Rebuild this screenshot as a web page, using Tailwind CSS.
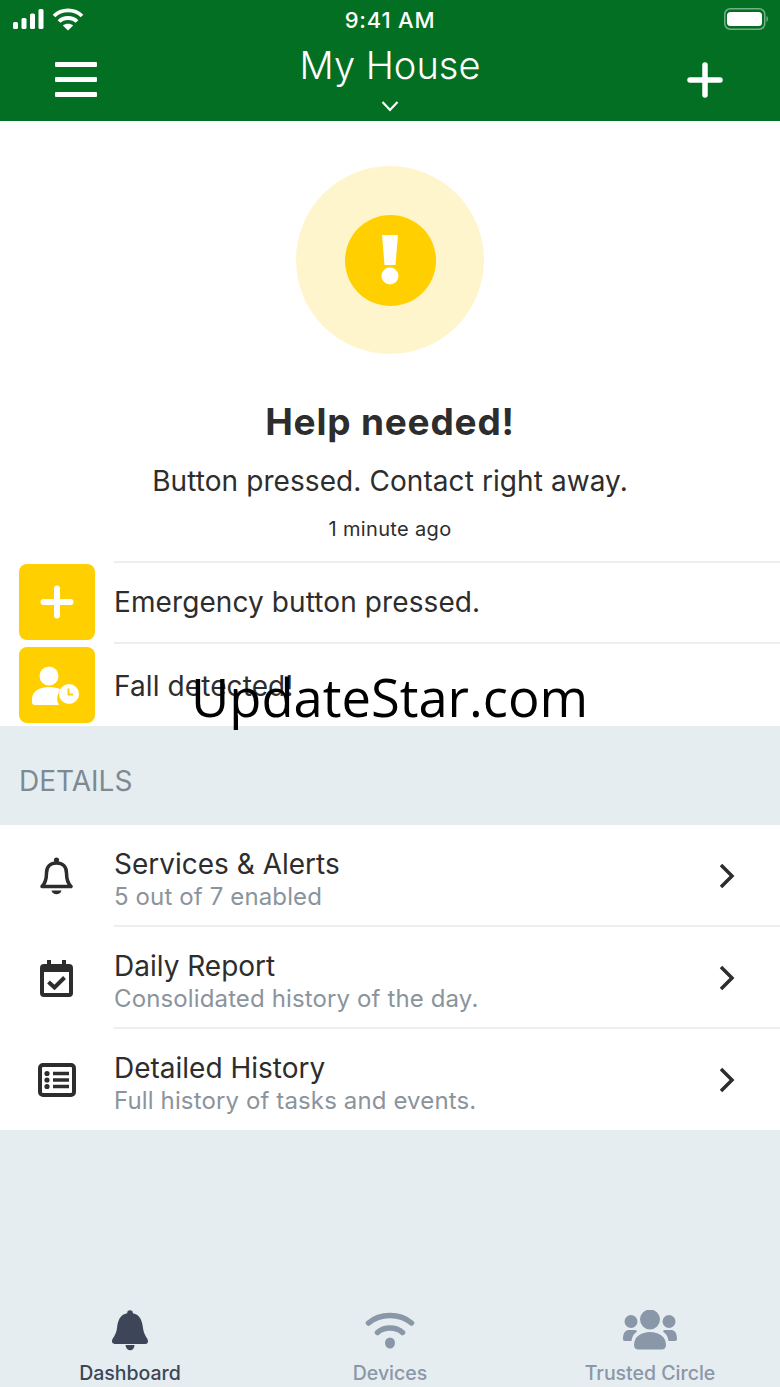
<!DOCTYPE html>
<html><head><meta charset="utf-8"><script src="https://cdn.jsdelivr.net/npm/@tailwindcss/browser@4"></script></head>
<body class="m-0">
<div class="relative w-[780px] h-[1387px] overflow-hidden bg-[#e6edf0] font-['Inter',sans-serif] flex flex-col">
  <header class="h-[121px] bg-[#036f23] text-white shrink-0 flex flex-col">
    <div class="h-[40px] px-[12px] flex items-center justify-between relative">
      <div class="flex items-center gap-[6px] -mt-[2px]">
        <svg width="34" height="22" viewBox="0 0 34 22" fill="#fff"><rect x="1" y="14" width="5" height="7" rx="1.5"/><rect x="9.5" y="10" width="5" height="11" rx="1.5"/><rect x="18" y="5.5" width="5" height="15.5" rx="1.5"/><rect x="26.5" y="1" width="5" height="20" rx="1.5"/></svg>
        <svg width="32" height="24" viewBox="0 0 32 24" fill="none" stroke="#fff" stroke-width="3.800"><path d="M2 9C9.500 1.500 22.500 1.500 30 9"/><path d="M7 14.500C11.500 9.800 20.500 9.800 25 14.500"/><path d="M16 23.500L10.800 18.500C13.500 16 18.500 16 21.200 18.500Z" fill="#fff" stroke="none"/></svg>
      </div>
      <span class="absolute left-0 right-0 text-center text-[22px] tracking-[0.800px] font-medium leading-none">9:41 AM</span>
      <svg width="44" height="24" viewBox="0 0 44 24" fill="none"><rect x="0.750" y="0.750" width="40" height="20.500" rx="5.500" stroke="#fff" stroke-opacity=".45" stroke-width="1.500"/><rect x="3" y="4" width="35" height="14" rx="3.500" fill="#fff"/><path d="M42.500 8v6c1-.5 1.500-1.700 1.500-3s-.5-2.500-1.500-3z" fill="#fff" fill-opacity=".45"/></svg>
    </div>
    <div class="flex-1 relative flex justify-between items-start pl-[55px] pr-[57px]">
      <div class="mt-[22px] w-[42px] flex flex-col gap-[10px]"><span class="h-[5px] bg-white block rounded-[1px]"></span><span class="h-[5px] bg-white block rounded-[1px]"></span><span class="h-[5px] bg-white block rounded-[1px]"></span></div>
      <div class="absolute left-0 right-0 top-[1px] flex flex-col items-center">
        <span class="text-[38px] leading-[48px] font-light">My House</span>
        <svg width="20" height="12" viewBox="0 0 20 12" fill="none" stroke="#fff" stroke-width="2.200" class="mt-[11px]"><path d="M2.500 2L10 10L17.500 2"/></svg>
      </div>
      <svg width="36" height="36" viewBox="0 0 36 36" class="mt-[22px]" stroke="#fff" stroke-width="5.500" stroke-linecap="round"><path d="M18 3V33M3 18H33"/></svg>
    </div>
  </header>

  <section class="h-[605px] bg-white shrink-0 flex flex-col">
    <div class="flex flex-col items-center pt-[45px]">
      <div class="w-[188px] h-[188px] rounded-full bg-[#fff5cc] flex items-center justify-center">
        <div class="w-[91px] h-[91px] rounded-full bg-[#ffcf00] flex items-center justify-center">
          <svg width="20" height="50" viewBox="0 0 20 50" fill="#fff"><path d="M2 0H18L15.500 30H4.500Z"/><circle cx="10" cy="41" r="8.500"/></svg>
        </div>
      </div>
      <h1 class="mt-[46px] text-[37px] leading-[44px] font-bold tracking-[0.800px] text-[#2d2d2d]">Help needed!</h1>
      <p class="mt-[20px] text-[28px] leading-[34px] tracking-[0.080px] text-[#2d2d2d]">Button pressed. Contact right away.</p>
      <p class="mt-[18px] text-[20px] leading-[26px] tracking-[0.350px] text-[#2d2d2d]">1 minute ago</p>
    </div>
    <div class="mt-[19px] flex flex-col">
      <div class="flex h-[83px] pl-[19px]">
        <div class="mt-[3px] w-[76px] h-[76px] rounded-[8px] bg-[#ffcf00] flex items-center justify-center shrink-0">
          <svg width="34" height="34" viewBox="0 0 34 34" stroke="#fff" stroke-width="6" stroke-linecap="round"><path d="M17 3.500V30.500M3.500 17H30.500"/></svg>
        </div>
        <div class="ml-[19px] flex-1 border-y-2 border-[#eceff1] flex items-center pb-[2px] text-[28px] tracking-[0.100px] text-[#2d2d2d]">Emergency button pressed.</div>
      </div>
      <div class="flex h-[83px] pl-[19px]">
        <div class="mt-[3px] w-[76px] h-[76px] rounded-[8px] bg-[#ffcf00] flex items-center justify-center shrink-0">
          <svg width="50" height="42" viewBox="0 0 50 42" fill="#fff"><circle cx="17" cy="12" r="9.500"/><path d="M3 41C1 41 0 40 0 38V35C0 27 8 23 17 23C22 23 26 24 29 25.500C25 29.500 24 36 27 41Z"/><circle cx="37" cy="30" r="10"/><path d="M36.500 24.500V30.500H41" stroke="#ffcf00" stroke-width="2" fill="none"/></svg>
        </div>
        <div class="ml-[19px] flex-1 flex items-start pt-[25px] text-[28px] leading-[34px] tracking-[0.100px] text-[#2d2d2d]">Fall detected!</div>
      </div>
    </div>
  </section>

  <div class="h-[99px] shrink-0 flex items-center pl-[19px] pt-[10px] text-[28px] leading-none text-[#7e8a93]">DETAILS</div>

  <section class="bg-white shrink-0 flex flex-col">
    <div class="h-[102px] flex items-center pl-[40px]">
      <svg width="33" height="38" viewBox="0 0 33 38" fill="none" stroke="#2d2d2d" stroke-width="3.500" stroke-linejoin="round" class="shrink-0"><path d="M2 29.500C5.500 26 6.500 22 6.500 16C6.500 9.500 10.500 6 16.500 6C22.500 6 26.500 9.500 26.500 16C26.500 22 27.500 26 31 29.500Z"/><circle cx="16.500" cy="3" r="2.600" fill="#2d2d2d" stroke="none"/><path d="M11.500 33.500H21.500C20.500 38.500 12.500 38.500 11.500 33.500Z" fill="#2d2d2d" stroke="none"/></svg>
      <div class="ml-[41px] flex-1 self-stretch border-b-2 border-[#eceff1] flex flex-col justify-center pt-[10px]">
        <div class="text-[28px] leading-[32px] text-[#2d2d2d]">Services &amp; Alerts</div>
        <div class="mt-[2px] text-[24px] leading-[30px] tracking-[0.130px] text-[#8a949c]">5 out of 7 enabled</div>
      </div>
    </div>
    <div class="h-[102px] flex items-center pl-[40px]">
      <svg width="33" height="37" viewBox="0 0 33 37" fill="none" class="shrink-0"><rect x="2" y="6" width="29" height="29" rx="2" stroke="#2d2d2d" stroke-width="4"/><path d="M2 6H31V12H2Z" fill="#2d2d2d"/><path d="M9 0V7M24 0V7" stroke="#2d2d2d" stroke-width="4"/><path d="M8.500 22L14.500 27.500L24.500 17.500" stroke="#2d2d2d" stroke-width="4"/></svg>
      <div class="ml-[41px] flex-1 self-stretch border-b-2 border-[#eceff1] flex flex-col justify-center pt-[10px]">
        <div class="text-[28px] leading-[32px] text-[#2d2d2d]">Daily Report</div>
        <div class="mt-[2px] text-[24px] leading-[30px] tracking-[0.130px] text-[#8a949c]">Consolidated history of the day.</div>
      </div>
    </div>
    <div class="h-[101px] flex items-center pl-[38px]">
      <svg width="38" height="34" viewBox="0 0 38 34" fill="none" class="shrink-0"><rect x="2" y="2" width="34" height="30" rx="3" stroke="#2d2d2d" stroke-width="4"/><path d="M15 10.500H31M15 17H31M15 23.500H31" stroke="#2d2d2d" stroke-width="3.500"/><circle cx="9" cy="10.500" r="2.600" fill="#2d2d2d"/><circle cx="9" cy="17" r="2.600" fill="#2d2d2d"/><circle cx="9" cy="23.500" r="2.600" fill="#2d2d2d"/></svg>
      <div class="ml-[38px] flex-1 self-stretch flex flex-col justify-center pt-[8px]">
        <div class="text-[28px] leading-[32px] text-[#2d2d2d]">Detailed History</div>
        <div class="mt-[2px] text-[24px] leading-[30px] tracking-[0.130px] text-[#8a949c]">Full history of tasks and events.</div>
      </div>
    </div>
  </section>

  <nav class="mt-auto h-[87px] pt-[10px] flex items-start">
    <div class="flex-1 flex flex-col items-center"><svg width="38" height="42" viewBox="0 0 38 42" fill="#3c4658"><circle cx="19" cy="3" r="2.800"/><path d="M1 31C1 28 5 26 6 18C7 8 11 3 19 3C27 3 31 8 32 18C33 26 37 28 37 31C37 34 35 34 33 34H5C3 34 1 34 1 31Z"/><path d="M14.500 35H23.500C23.500 42 15 42 14.500 35Z"/></svg><span class="text-[19.500px] leading-[24px] mt-[9px] font-medium text-[#3c4658]">Dashboard</span></div>
    <div class="flex-1 flex flex-col items-center"><svg width="50" height="42" viewBox="0 0 50 42" fill="none" stroke="#8a97a8" stroke-width="5.500" stroke-linecap="round"><path d="M3.500 13C15 3 35 3 46.500 13"/><path d="M12.500 22.500C19 16.500 31 16.500 37.500 22.500"/><ellipse cx="25" cy="33" rx="5" ry="5.500" fill="#8a97a8" stroke="none"/></svg><span class="text-[19.500px] leading-[24px] mt-[9px] font-medium text-[#8a97a8]">Devices</span></div>
    <div class="flex-1 flex flex-col items-center"><svg width="58" height="42" viewBox="0 0 58 42" fill="#8a97a8"><circle cx="29" cy="9.500" r="10"/><circle cx="10" cy="11.500" r="6.500"/><circle cx="48" cy="11.500" r="6.500"/><path d="M13 35C13 27 20 22 29 22C38 22 45 27 45 35C45 38 43 39.500 41 39.500H17C15 39.500 13 38 13 35Z"/><path d="M2 29C2 22 5 20 8 20H14C15.500 20 16.500 21 15.500 22C12.500 24 11 27 10.500 31H4C2.500 31 2 30 2 29Z"/><path d="M56 29C56 22 53 20 50 20H44C42.500 20 41.500 21 42.500 22C45.500 24 47 27 47.500 31H54C55.500 31 56 30 56 29Z"/></svg><span class="text-[19.500px] leading-[24px] mt-[9px] font-medium text-[#8a97a8]">Trusted Circle</span></div>
  </nav>

  <svg width="20" height="26" viewBox="0 0 20 26" fill="none" stroke="#2d2d2d" stroke-width="3.500" class="absolute left-[718px] top-[863px]"><path d="M3 2L14 13L3 24"/></svg>
  <svg width="20" height="26" viewBox="0 0 20 26" fill="none" stroke="#2d2d2d" stroke-width="3.500" class="absolute left-[718px] top-[965px]"><path d="M3 2L14 13L3 24"/></svg>
  <svg width="20" height="26" viewBox="0 0 20 26" fill="none" stroke="#2d2d2d" stroke-width="3.500" class="absolute left-[718px] top-[1067px]"><path d="M3 2L14 13L3 24"/></svg>
  <div class="absolute left-[191px] top-[663px] text-[52.500px] leading-[68px] text-black font-['Open_Sans',sans-serif]">UpdateStar.com</div>
</div>
</body></html>
